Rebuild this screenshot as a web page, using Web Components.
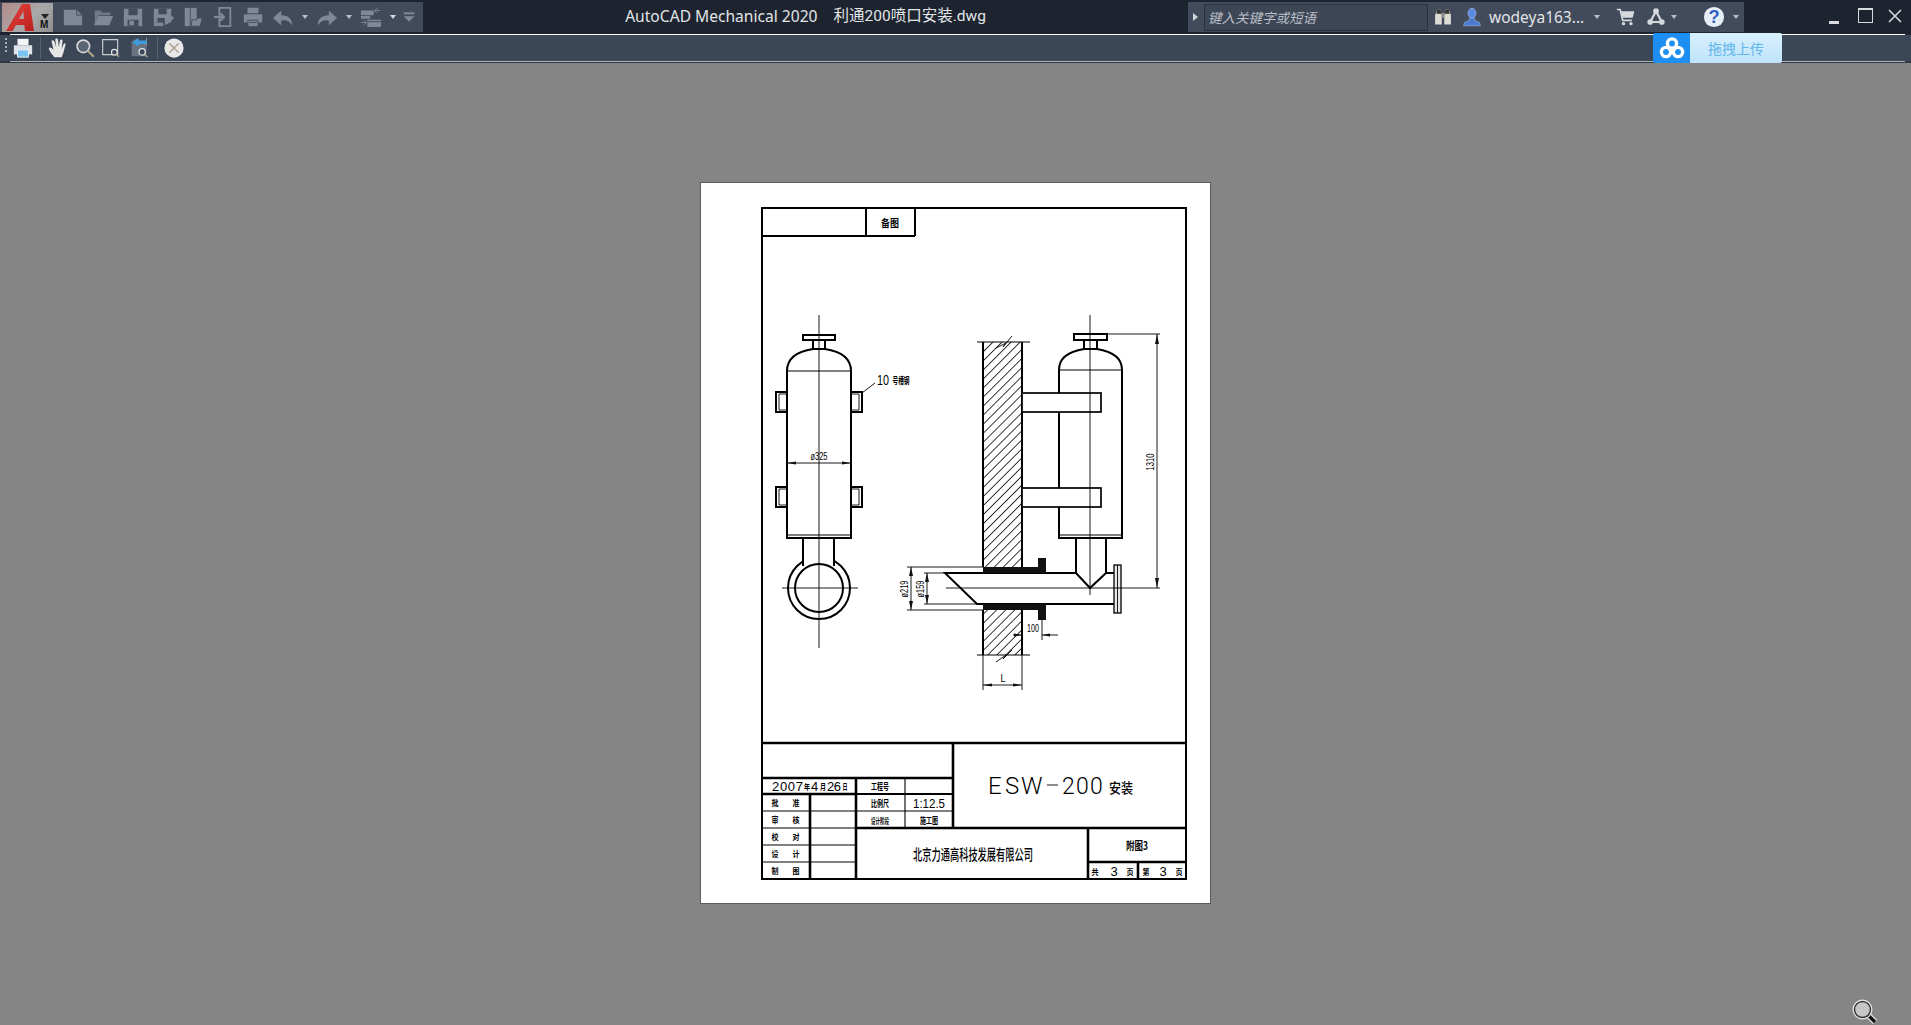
<!DOCTYPE html>
<html>
<head>
<meta charset="utf-8">
<title>AutoCAD Mechanical 2020</title>
<style>
html,body{margin:0;height:100%;background:#858585;overflow:hidden;}
body{font-family:"Noto Sans","Noto Sans CJK SC",sans-serif;}
</style>
</head>
<body>
<cad-app>
    <cad-titlebar app-name="AutoCAD Mechanical 2020" file-name="利通200喷口安装.dwg"></cad-titlebar>
    <cad-toolbar></cad-toolbar>
    <cad-canvas><cad-sheet></cad-sheet></cad-canvas>
    <cad-upload></cad-upload>
</cad-app>

<script>
//all the toolbar glyphs, 24x24 box
const ICONS = {
    'new':`<path d="M2 4h14l6 6v11H2z" fill="currentColor"/><path d="M16 4v6h6" fill="none" stroke="#414b5c"/>`,
    'open':`<path d="M3 5h6l2 2h9v3H7L3 20z" fill="currentColor" opacity=".75"/><path d="M7 11h16l-4 10H2z" fill="currentColor"/>`,
    'save':`<path d="M2 3h20v19H2z" fill="currentColor"/><path d="M7 3h10v7H7z" fill="#414b5c"/><path d="M6 15h12v7H6z" fill="#414b5c"/><path d="M8 16h5v5H8z" fill="currentColor"/>`,
    'saveas':`<path d="M2 3h19v15H2z" fill="currentColor"/><path d="M7 3h9v6H7zM6 13h8v7H6z" fill="#414b5c"/><path d="M2 18h10v4H2z" fill="currentColor"/><path d="M13 21l2-5 7-5 2 2-6 6z" fill="currentColor"/>`,
    'publish':`<path d="M3 2h13v20H3z" fill="currentColor"/><path d="M9 2v20" stroke="#414b5c"/><path d="M11 15h5l1-2h5l-2 9H10z" fill="currentColor" stroke="#414b5c"/>`,
    'import':`<path d="M8 2h12v20H8z" fill="none" stroke="currentColor" stroke-width="2"/><path d="M2 12h10M9 8l4 4-4 4" fill="none" stroke="currentColor" stroke-width="2.4"/>`,
    'print':`<path d="M6 2h12v6H6zM2 9h20v9h-4v-3H6v3H2z" fill="currentColor"/><path d="M7 16h10v6H7z" fill="currentColor"/><path d="M8 18h8" stroke="#414b5c"/>`,
    'undo':`<path d="M10 5L1 13l9 8v-5c5-1 8 0 12 5 0-7-4-11-12-11z" fill="currentColor"/>`,
    'redo':`<path d="M14 5l9 8-9 8v-5c-5-1-8 0-12 5 0-7 4-11 12-11z" fill="currentColor"/>`,
    'workspace':`<path d="M1 5h14v5H1zM1 11h10v3H1zM8 15h15v8H8z" fill="currentColor"/><path d="M8 17h15" stroke="#414b5c"/><path d="M16 5h6M19 2l-3 3 3 3M1 18h6M4 15l3 3-3 3" fill="none" stroke="currentColor"/>`,
    'more':`<path d="M4 5h16v3H4z" fill="currentColor"/><path d="M4 11h16l-8 8z" fill="currentColor"/>`,
    'printer':`<path d="M6 2h12v7H6z" fill="#f2f4f6"/><path d="M2 9h20v10H2z" fill="#dfe3e7"/><path d="M6 14h12v8H6z" fill="#7cc4f0" stroke="#f2f4f6"/>`,
    'hand':`<path d="M8 22c-2-3-5-6-6-9 0-2 2-2 3-1l2 2-2-9c0-2 2-2 3 0l2 6-1-8c0-2 3-2 3 0l1 8 1-7c1-2 3-1 3 0l-1 9 2-5c1-2 3-1 2 1l-2 8-2 5z" fill="#e6e6e6"/>`,
    'zoom':`<circle cx="10" cy="10" r="7.5" fill="#5a6573" stroke="#d6d8da" stroke-width="2"/><path d="M15.5 15.5l7 7" stroke="#b7a98c" stroke-width="2.4"/>`,
    'zoomwin':`<path d="M2 2h18v18H2z" fill="none" stroke="#c8ccd0" stroke-width="1.4"/><circle cx="16" cy="17" r="3.4" fill="#3b4656" stroke="#e4e6e8" stroke-width="1.4"/><path d="M18.5 19.5l3 3" stroke="#b7a98c" stroke-width="1.6"/>`,
    'zoomprev':`<path d="M3 6h17v16H3z" fill="#6a7380"/><path d="M3 6l7-4M20 1v9" stroke="#8c949e"/><path d="M4 6l7-5v3h9v4h-9v3z" fill="#3e9be0"/><circle cx="15" cy="17" r="3.6" fill="#3b4656" stroke="#e4e6e8" stroke-width="1.4"/><path d="M18 20l3 3" stroke="#b7a98c" stroke-width="1.6"/>`,
    'close':`<circle cx="12" cy="12" r="10.5" fill="#e8e8e8"/><path d="M7 7l10 10M17 7L7 17" stroke="#a08f7c" stroke-width="1.4"/>`,
    'binoculars':`<path d="M5 3h4l1.5 7v11H2.5V10zM15 3h4l2.5 7v11h-8V10z" fill="#dcdcd4"/><path d="M10.5 7h3v6h-3z" fill="#8d8d86"/><path d="M5 3h4l1 5H4zM15 3h4l1 5h-6z" fill="#33332f"/>`,
    'user':`<ellipse cx="12" cy="7.5" rx="4.8" ry="6" fill="#5b8be0" stroke="#b8ccf0" stroke-width=".6"/><path d="M9.5 13h5l.8 3 6 3 .7 3.5H2l.7-3.5 6-3z" fill="#4b78d0" stroke="#b8ccf0" stroke-width=".6"/>`,
    'cart':`<path d="M1 3h4l3 13h11" fill="none" stroke="#d6dade" stroke-width="2"/><path d="M6 5h16l-2 8H8z" fill="#d6dade"/><circle cx="9" cy="20" r="2" fill="#d6dade"/><circle cx="18" cy="20" r="2" fill="#d6dade"/>`,
    'network':`<path d="M12 5L5 18h14z" fill="none" stroke="#d6dade" stroke-width="2.6"/><circle cx="12" cy="5" r="3.4" fill="#d6dade"/><circle cx="5" cy="18" r="3.4" fill="#d6dade"/><circle cx="19" cy="18" r="3.4" fill="#d6dade"/>`,
    'help':`<circle cx="12" cy="12" r="11" fill="#e8eef6"/><text x="12" y="19" font-size="20" font-weight="700" text-anchor="middle" fill="#2f62bd" font-family="Liberation Sans">?</text>`
};

class CadIcon extends HTMLElement
{
    constructor(){
        super();
        this.attachShadow({mode:'open'});
        const size = this.getAttribute('size') || 24;
        this.shadowRoot.innerHTML = `
            <style>
                :host{display:flex;align-items:center;justify-content:center;flex:none;color:#7f8896;}
                svg{display:block;}
            </style>
            <svg width="${size}" height="${size}" viewBox="0 0 24 24">${ICONS[this.getAttribute('name')] || ''}</svg>`;
    }
}
customElements.define('cad-icon',CadIcon);

//tiny dropdown triangle
class CadCaret extends HTMLElement
{
    constructor(){
        super();
        this.attachShadow({mode:'open'});
        this.shadowRoot.innerHTML = `
            <style>
                :host{display:block;flex:none;width:0;height:0;border:3.5px solid transparent;border-top:4px solid var(--caret,#b9bfc8);border-bottom:0;}
            </style>`;
    }
}
customElements.define('cad-caret',CadCaret);

class CadTitlebar extends HTMLElement
{
    constructor(){
        super();
        this.attachShadow({mode:'open'});
        this.shadowRoot.innerHTML = `
            <style>
                :host{display:flex;height:33px;background:#1d2430;color:#e2e4e6;box-sizing:border-box;padding-top:2px;}
                .qat{display:flex;align-items:center;width:423px;height:30px;background:#414b5c;flex:none;}
                .logo{display:flex;width:51px;height:29px;margin:1px 0 0 2px;background:linear-gradient(135deg,#b28a88,#a9a9a9 55%,#8f8f8f);position:relative;flex:none;}
                .logo svg{position:absolute;left:3px;top:0;}
                .logo i{position:absolute;left:39px;top:11px;width:0;height:0;border:4px solid transparent;border-top:5px solid #222;border-bottom:0;}
                .logo b{position:absolute;left:38px;top:16px;font:700 10px "Liberation Sans",sans-serif;color:#111;}
                .qat-icons{display:flex;align-items:center;margin-left:9px;}
                .qat-icons cad-icon{margin-right:8px;}
                .qat-icons cad-caret{margin:0 8px 0 0;}
                .title{flex:1;display:flex;justify-content:center;gap:16px;line-height:28px;white-space:nowrap;font-family:"Noto Sans","Noto Sans CJK SC",sans-serif;font-size:15.6px;}
                .title .file{font-family:Roboto,"Noto Sans CJK SC",sans-serif;font-size:15.5px;}
                .info{display:flex;align-items:center;width:556px;height:30px;background:#414b5c;flex:none;}
                .arrow{width:0;height:0;border:4.5px solid transparent;border-left:5px solid #d0d4d8;border-right:0;margin-left:5px;}
                .search{width:224px;height:27px;box-sizing:border-box;margin-left:6px;background:#3c4655;border:1px solid #2a3240;
                    font-size:13.5px;font-style:italic;line-height:25px;color:#b9bec6;padding-left:3px;font-family:"Noto Sans CJK SC",sans-serif;}
                .user-name{font-size:15.5px;margin:0 9px 0 7px;white-space:nowrap;width:96px;}
                .win{display:flex;flex:none;width:167px;height:30px;box-sizing:border-box;align-items:center;padding-left:85px;}
                .min{width:10px;height:3px;background:#d8dade;margin-top:10px;}
                .max{width:13px;height:12px;border:1px solid #d8dade;border-top-width:2px;margin-left:19px;margin-top:-3px;flex:none;}
                .x{margin-left:15px;margin-top:-2px;flex:none;}
            </style>
            <div class="qat">
                <div class="logo">
                    <svg width="32" height="29" viewBox="0 0 32 29"><defs><linearGradient id="ared" x1="0" y1="0" x2="1" y2="1"><stop offset="0" stop-color="#e8443c"/><stop offset="1" stop-color="#b8201f"/></linearGradient></defs><path d="M1 28L17 1h8l4 27h-9l-.7-6H11l-3.4 6zM14 16h5l-.7-8z" fill="url(#ared)"/></svg>
                    <i></i><b>M</b>
                </div>
                <div class="qat-icons">
                    <cad-icon name="new" size="22"></cad-icon>
                    <cad-icon name="open" size="22"></cad-icon>
                    <cad-icon name="save" size="22"></cad-icon>
                    <cad-icon name="saveas" size="22"></cad-icon>
                    <cad-icon name="publish" size="22"></cad-icon>
                    <cad-icon name="import" size="22"></cad-icon>
                    <cad-icon name="print" size="22"></cad-icon>
                    <cad-icon name="undo" size="22"></cad-icon>
                    <cad-caret></cad-caret>
                    <cad-icon name="redo" size="22"></cad-icon>
                    <cad-caret></cad-caret>
                    <cad-icon name="workspace" size="22"></cad-icon>
                    <cad-caret style="--caret:#d6dade"></cad-caret>
                    <cad-icon name="more" size="16" style="margin:0 0 0 -3px"></cad-icon>
                </div>
            </div>
            <div class="title"><span>${this.getAttribute('app-name')}</span><span class="file">${this.getAttribute('file-name')}</span></div>
            <div class="info">
                <div class="arrow"></div>
                <div class="search">键入关键字或短语</div>
                <cad-icon name="binoculars" size="20" style="margin-left:5px"></cad-icon>
                <cad-icon name="user" size="20" style="margin-left:9px"></cad-icon>
                <div class="user-name">wodeya163...</div>
                <cad-caret></cad-caret>
                <cad-icon name="cart" size="20" style="margin-left:16px"></cad-icon>
                <cad-icon name="network" size="20" style="margin-left:10px"></cad-icon>
                <cad-caret style="margin-left:5px"></cad-caret>
                <cad-icon name="help" size="22" style="margin-left:26px"></cad-icon>
                <cad-caret style="margin-left:8px"></cad-caret>
            </div>
            <div class="win">
                <div class="min"></div>
                <div class="max"></div>
                <svg class="x" width="14" height="14" viewBox="0 0 14 14"><path d="M1 1l12 12M13 1L1 13" stroke="#d8dade" stroke-width="1.5"/></svg>
            </div>`;
    }
}
customElements.define('cad-titlebar',CadTitlebar);

class CadToolbar extends HTMLElement
{
    constructor(){
        super();
        this.attachShadow({mode:'open'});
        this.shadowRoot.innerHTML = `
            <style>
                :host{display:flex;align-items:center;height:30px;box-sizing:border-box;background:linear-gradient(#1d2430 2px,#3b4656 2px,#3b4656 28px,#2f3845 28px);position:relative;padding-bottom:1px;}
                :host::before,:host::after{content:"";position:absolute;left:10px;right:6px;height:1px;}
                :host::before{top:1px;background:#fff;}
                :host::after{bottom:1px;background:#b0b4b8;}
                .grip{width:2px;height:14px;margin:0 0 6px 5px;border-left:2px dotted #aab0b8;}
                .sep{width:1px;height:22px;background:#59636f;flex:none;}
            </style>
            <div class="grip"></div>
            <cad-icon name="printer" size="22" style="margin-left:3px"></cad-icon>
            <div class="sep" style="margin-left:6px"></div>
            <cad-icon name="hand" size="22" style="margin-left:6px"></cad-icon>
            <cad-icon name="zoom" size="20" style="margin-left:6px"></cad-icon>
            <cad-icon name="zoomwin" size="20" style="margin-left:6px"></cad-icon>
            <cad-icon name="zoomprev" size="21" style="margin-left:8px"></cad-icon>
            <div class="sep" style="margin-left:7px"></div>
            <cad-icon name="close" size="22" style="margin-left:5px"></cad-icon>`;
    }
}
customElements.define('cad-toolbar',CadToolbar);

class CadCanvas extends HTMLElement
{
    constructor(){
        super();
        this.attachShadow({mode:'open'});
        this.shadowRoot.innerHTML = `
            <style>
                :host{display:flex;flex:1;align-items:center;justify-content:center;background:#858585;position:relative;padding-bottom:2px;}
                .lens{position:absolute;right:33px;bottom:0;}
            </style>
            <slot></slot>
            <svg class="lens" width="26" height="26" viewBox="0 0 26 26">
                <path d="M15 15l8 8" stroke="#e8e8e8" stroke-width="6"/>
                <path d="M16 16l7 7" stroke="#111" stroke-width="3.4"/>
                <circle cx="10.5" cy="10.5" r="8" fill="#c6c6c6" stroke="#333" stroke-width="1.4"/>
                <circle cx="10.5" cy="10.5" r="9.4" fill="none" stroke="#e8e8e8" stroke-width="1.2"/>
            </svg>`;
    }
}
customElements.define('cad-canvas',CadCanvas);

//baidu style upload tab sitting over the toolbar
class CadUpload extends HTMLElement
{
    constructor(){
        super();
        this.attachShadow({mode:'open'});
        this.shadowRoot.innerHTML = `
            <style>
                :host{display:flex;position:absolute;left:1653px;top:33px;width:129px;height:30px;border-radius:2px;overflow:hidden;}
                .cloud{display:flex;align-items:center;justify-content:center;width:37px;background:#1e8ff2;}
                .label{flex:1;display:flex;align-items:center;justify-content:center;background:linear-gradient(#d8f0fd,#bfe4fb);
                    color:#62b6ea;font:14px "Noto Sans CJK SC",sans-serif;}
            </style>
            <div class="cloud">
                <svg width="26" height="24" viewBox="0 0 26 24" fill="none" stroke="#fff" stroke-width="3.4">
                    <circle cx="13" cy="7.5" r="4.6"/><circle cx="7" cy="16" r="4.6"/><circle cx="19" cy="16" r="4.6"/>
                </svg>
            </div>
            <div class="label">拖拽上传</div>`;
    }
}
customElements.define('cad-upload',CadUpload);

class CadApp extends HTMLElement
{
    constructor(){
        super();
        this.attachShadow({mode:'open'});
        this.shadowRoot.innerHTML = `
            <style>
                :host{display:flex;flex-direction:column;height:100vh;position:relative;}
            </style>
            <slot></slot>`;
    }
}
customElements.define('cad-app',CadApp);

//the paper: svg uses screen coordinates so numbers can be read off the reference
class CadSheet extends HTMLElement
{
    constructor(){
        super();
        this.attachShadow({mode:'open'});
        this.shadowRoot.innerHTML = `
            <style>
                :host{display:block;flex:none;width:509px;height:720px;background:#fff;box-shadow:0 0 0 1px #5c5c5c;}
                svg{display:block;}
                text{fill:#000;font-family:"Noto Sans CJK SC","Liberation Sans",sans-serif;font-size:10px;}
                .l{fill:none;stroke:#000;stroke-width:1.1;}
                .m{fill:none;stroke:#000;stroke-width:2;}
                .h{fill:none;stroke:#000;stroke-width:2.6;}
                .t{fill:none;stroke:#000;stroke-width:.9;}
                .w{fill:#fff;stroke:#000;stroke-width:1.7;}
                .k{fill:#111;stroke:none;}
                .digit{font-family:"Liberation Sans",sans-serif;font-weight:400;}
                .thin{font-family:Roboto,"Liberation Sans",sans-serif;font-weight:300;font-size:24px;}
            </style>
            <svg width="509" height="720" viewBox="701 183 509 720">
                <defs>
                    <pattern id="hatch" width="6.4" height="6.4" patternUnits="userSpaceOnUse" patternTransform="rotate(-45)">
                        <path d="M0 3.2h6.4" stroke="#222" stroke-width=".9"/>
                    </pattern>
                </defs>
                ${this.frame()}
                ${this.sideView()}
                ${this.mainView()}
                ${this.titleBlock()}
            </svg>`;
    }

    line(x1,y1,x2,y2,cls='l'){
        return `<path class="${cls}" d="M${x1} ${y1}L${x2} ${y2}"/>`;
    }

    //text squeezed to a width, cad fonts are much narrower than ours
    text(x,y,str,w,size=10,extra=''){
        return `<text x="${x}" y="${y}" text-anchor="middle" textLength="${w}" lengthAdjust="spacingAndGlyphs" style="font-size:${size}px" ${extra}>${str}</text>`;
    }

    vtext(x,y,str,w,size=11){
        return `<text transform="translate(${x} ${y}) rotate(-90)" text-anchor="middle" textLength="${w}" lengthAdjust="spacingAndGlyphs" class="digit" style="font-size:${size}px">${str}</text>`;
    }

    frame(){
        return `
            <rect class="h" x="762" y="208" width="424" height="671" style="stroke-width:2"/>
            ${this.line(762,236,915,236,'m')}
            ${this.line(866,208,866,236,'m')}
            ${this.line(915,208,915,236,'m')}
            ${this.text(890,227,'备图',18,10,'font-weight="700"')}`;
    }

    sideView(){
        const bracket = (x,y,dir) => {
            const x2 = x + dir*11;
            return `<path class="m" d="M${x} ${y}H${x2}V${y+20}H${x}"/><path class="t" d="M${x} ${y+2}H${x+dir*8}V${y+18}H${x}"/>`;
        };
        return `
            <path class="m" d="M787 371V538H851V371Q851 353 825 349H813Q787 353 787 371Z"/>
            ${this.line(787,371,851,371)}
            ${this.line(787,535,851,535)}
            <path class="m" d="M813 349V340M825 349V340"/>
            <rect class="m" x="803" y="335" width="32" height="5"/>
            <circle class="m" cx="819" cy="588" r="31"/>
            <rect fill="#fff" x="804" y="552" width="29" height="13"/>
            <path class="m" d="M803 538V566M834 538V566"/>
            <circle class="m" cx="819" cy="588" r="24"/>
            ${this.line(819,315,819,648,'t')}
            ${this.line(782,588,858,588,'t')}
            ${bracket(787,392,-1)}
            ${bracket(851,392,1)}
            ${bracket(787,487,-1)}
            ${bracket(851,487,1)}
            ${this.line(787,463,851,463,'t')}
            <path class="k" d="M787 463l9-1.6v3.2zM851 463l-9-1.6v3.2z"/>
            ${this.text(819,460,'ø325',17,11,'class="digit" font-weight="700"')}
            ${this.line(862,393,875,383,'t')}
            ${this.text(883,385,'10',12,15,'class="digit"')}
            ${this.text(901,384,'号槽钢',17,9,'font-weight="700"')}`;
    }

    mainView(){
        return `
            <path fill="url(#hatch)" d="M983 342H1022V567H983ZM983 610H1022V655H983Z"/>
            <path class="m" d="M983 342V567M1022 342V567M983 610V655M1022 610V655"/>
            ${this.line(977,342,1030,342)}
            ${this.line(977,655,1030,655)}
            <path class="t" d="M996 348l10-5-3 4 9-11"/>
            <path class="t" d="M996 662l10-7-3 4 9-9"/>

            <path class="m" d="M1059 370V538H1122V370Q1122 353 1097 349H1084Q1059 353 1059 370Z"/>
            ${this.line(1059,370,1122,370)}
            ${this.line(1059,535,1122,535)}
            <path class="m" d="M1084 349V340M1097 349V340"/>
            <rect class="m" x="1074" y="334" width="33" height="6"/>
            <rect class="w" x="1022" y="393" width="79" height="19"/>
            <rect class="w" x="1022" y="488" width="79" height="19"/>

            <path class="m" d="M1076 538V573L1090 588L1106 573V538"/>
            <path class="m" d="M1076 573H945L977 604H1114M1106 573H1114"/>
            <rect fill="#e8e8e8" stroke="#000" stroke-width="1.3" x="1114" y="565" width="7" height="48"/>
            ${this.line(1117.5,565,1117.5,613,'t')}
            ${this.line(946,588,1160,588,'t')}
            ${this.line(1090,315,1090,595,'t')}

            <path class="k" d="M983 567H1046V573H983ZM1038 558H1046V573H1038ZM983 604H1046V610H983ZM1038 604H1046V620H1038Z"/>

            <path class="t" d="M1107 334H1160M1157 334V588"/>
            <path class="k" d="M1157 334l-2 10h4zM1157 588l-2-10h4z"/>
            ${this.vtext(1154,462,'1310',17)}

            <path class="t" d="M907 567H983M907 610H983M911 567V610M924 573H945M924 604H977M927 573V604"/>
            <path class="k" d="M911 567l-2 9h4zM911 610l-2-9h4zM927 573l-2 9h4zM927 604l-2-9h4z"/>
            ${this.vtext(908,589,'ø219',17)}
            ${this.vtext(924,589,'ø159',17)}

            <path class="t" d="M1013 635H1022M1042 635H1058M1042 620V640"/>
            <path class="k" d="M1022 635l-8-1.6v3.2zM1042 635l8-1.6v3.2z"/>
            ${this.text(1033,632,'100',12,11,'class="digit"')}

            <path class="t" d="M983 655V690M1022 655V690M983 685H1022"/>
            <path class="k" d="M983 685l9-1.6v3.2zM1022 685l-9-1.6v3.2z"/>
            ${this.text(1003,682,'L',5,11,'class="digit"')}`;
    }

    titleBlock(){
        const names = [['批','准',806],['审','核',823],['校','对',840],['设','计',857],['制','图',874]];
        const rows = names.map(n => `
            ${this.text(775,n[2],n[0],7,8,'font-weight="700"')}
            ${this.text(796,n[2],n[1],7,8,'font-weight="700"')}`).join('');
        return `
            <path class="h" d="M762 743H1186M953 743V828M762 778H953M762 794H856M810 794V879M856 778V879M856 828H1186M1088 828V879M1088 862H1186M1138 862V879"/>
            <path class="m" d="M856 794H953"/>
            <path class="l" d="M905 778V828M762 811H953M762 828H856M762 845H856M762 862H856"/>
            ${rows}
            <text x="772" y="791" class="digit" textLength="31" lengthAdjust="spacing" style="font-size:13px">2007</text>
            ${this.text(807,790,'年',6,8,'font-weight="700"')}
            <text x="811" y="791" class="digit" style="font-size:13px">4</text>
            ${this.text(823,790,'月',6,8,'font-weight="700"')}
            <text x="827" y="791" class="digit" textLength="14" lengthAdjust="spacing" style="font-size:13px">26</text>
            ${this.text(845,790,'日',5,8,'font-weight="700"')}
            ${this.text(880,790,'工程号',18,9,'font-weight="700"')}
            ${this.text(880,807,'比例尺',18,9,'font-weight="700"')}
            ${this.text(880,824,'设计阶段',18,8,'font-weight="700"')}
            ${this.text(929,824,'施工图',18,9,'font-weight="700"')}
            ${this.text(929,808,'1:12.5',32,13,'class="digit"')}
            <text class="thin" x="988 1005 1021" y="794">ESW</text>
            <path class="t" d="M1047 785H1058"/>
            <text class="thin" x="1062 1076 1090" y="794" style="font-size:23px">200</text>
            ${this.text(1121,793,'安装',24,14,'font-weight="500"')}
            ${this.text(973,860,'北京力通高科技发展有限公司',120,15,'font-weight="500"')}
            ${this.text(1137,850,'附图3',22,11,'font-weight="700"')}
            ${this.text(1095,875,'共',7,8,'font-weight="700"')}
            <text x="1114" y="876" class="digit" style="font-size:13px" text-anchor="middle">3</text>
            ${this.text(1130,875,'页',7,8,'font-weight="700"')}
            ${this.text(1146,875,'第',7,8,'font-weight="700"')}
            <text x="1163" y="876" class="digit" style="font-size:13px" text-anchor="middle">3</text>
            ${this.text(1179,875,'页',7,8,'font-weight="700"')}`;
    }
}
customElements.define('cad-sheet',CadSheet);
</script>
</body>
</html>
